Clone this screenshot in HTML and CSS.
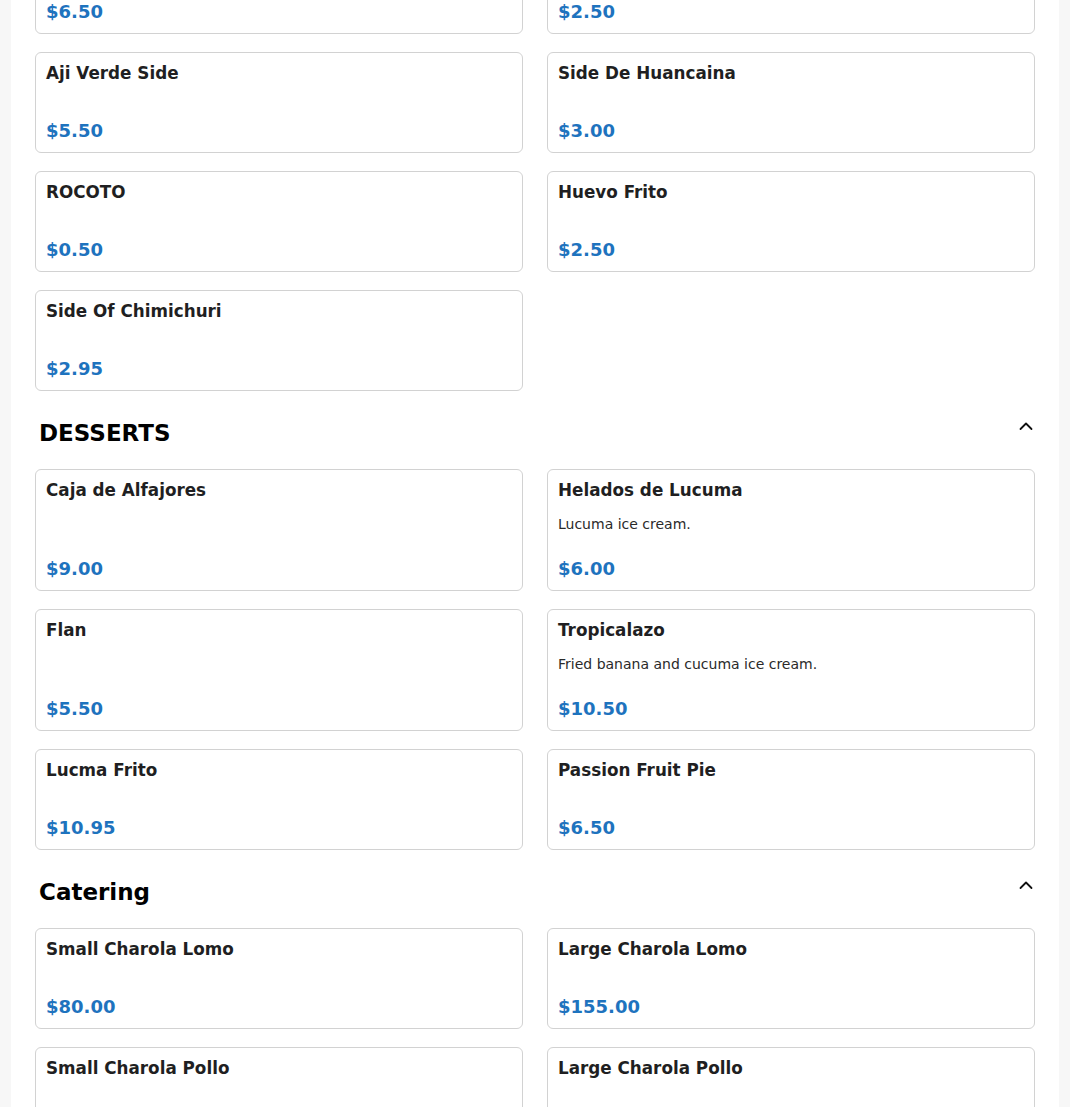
FILE: index.html
```html
<!DOCTYPE html>
<html lang="en">
<head>
<meta charset="utf-8">
<title>Menu</title>
<link rel="stylesheet" href="styles.css">
</head>
<body>
<main class="page">
  <section class="section first">
    <div class="grid">
      <div class="card"><div class="title">Side Of Yuca</div><div class="price">$6.50</div></div>
      <div class="card"><div class="title">Side Of Rice</div><div class="price">$2.50</div></div>
      <div class="card"><div class="title">Aji Verde Side</div><div class="price">$5.50</div></div>
      <div class="card"><div class="title">Side De Huancaina</div><div class="price">$3.00</div></div>
      <div class="card"><div class="title">ROCOTO</div><div class="price">$0.50</div></div>
      <div class="card"><div class="title">Huevo Frito</div><div class="price">$2.50</div></div>
      <div class="card"><div class="title">Side Of Chimichuri</div><div class="price">$2.95</div></div>
    </div>
  </section>

  <section class="section">
    <div class="section-head">
      <h2>DESSERTS</h2>
      <svg class="chev" width="16" height="16" viewBox="0 0 16 16"><path d="M2.5 10 L8 4.5 L13.5 10" fill="none" stroke="#111" stroke-width="1.8" stroke-linecap="round" stroke-linejoin="round"/></svg>
    </div>
    <div class="grid">
      <div class="card"><div class="title">Caja de Alfajores</div><div class="price">$9.00</div></div>
      <div class="card"><div class="title">Helados de Lucuma</div><div class="desc">Lucuma ice cream.</div><div class="price">$6.00</div></div>
      <div class="card"><div class="title">Flan</div><div class="price">$5.50</div></div>
      <div class="card"><div class="title">Tropicalazo</div><div class="desc">Fried banana and cucuma ice cream.</div><div class="price">$10.50</div></div>
      <div class="card"><div class="title">Lucma Frito</div><div class="price">$10.95</div></div>
      <div class="card"><div class="title">Passion Fruit Pie</div><div class="price">$6.50</div></div>
    </div>
  </section>

  <section class="section">
    <div class="section-head">
      <h2>Catering</h2>
      <svg class="chev" width="16" height="16" viewBox="0 0 16 16"><path d="M2.5 10 L8 4.5 L13.5 10" fill="none" stroke="#111" stroke-width="1.8" stroke-linecap="round" stroke-linejoin="round"/></svg>
    </div>
    <div class="grid">
      <div class="card"><div class="title">Small Charola Lomo</div><div class="price">$80.00</div></div>
      <div class="card"><div class="title">Large Charola Lomo</div><div class="price">$155.00</div></div>
      <div class="card"><div class="title">Small Charola Pollo</div><div class="price">$70.00</div></div>
      <div class="card"><div class="title">Large Charola Pollo</div><div class="price">$135.00</div></div>
    </div>
  </section>
</main>
</body>
</html>
```

FILE: styles.css
```css
* { box-sizing: border-box; }

html, body {
  margin: 0;
  padding: 0;
  background: #f7f7f7;
}

body {
  font-family: "DejaVu Sans", "Noto Sans", sans-serif;
  color: #1c1c1c;
}

.page {
  width: 1048px;
  margin: -67px auto 0;
  background: #ffffff;
  padding: 0 24px 40px;
  min-height: 1300px;
}

.section-head {
  display: flex;
  justify-content: space-between;
  align-items: flex-start;
  margin: 29px 0 23px;
  padding-left: 4px;
}

.section-head h2 {
  margin: 0;
  font-size: 23px;
  font-weight: bold;
  line-height: normal;
  color: #000;
}

.chev {
  margin-top: -1px;
  margin-right: 1px;
  display: block;
}

.grid {
  display: grid;
  grid-template-columns: 1fr 1fr;
  column-gap: 24px;
  row-gap: 18px;
}

.card {
  display: flex;
  flex-direction: column;
  border: 1px solid #d2d2d2;
  border-radius: 6px;
  padding: 10px 10px 11px;
  background: #fff;
}

.title {
  font-size: 16.8px;
  font-weight: bold;
  line-height: normal;
  color: #1f1f22;
  margin-bottom: 14px;
}

.desc {
  font-size: 14px;
  line-height: 21px;
  color: #2a2a2a;
}

.price {
  margin-top: auto;
  padding-top: 23px;
  font-size: 18px;
  font-weight: bold;
  line-height: normal;
  color: #1e73be;
}
```
